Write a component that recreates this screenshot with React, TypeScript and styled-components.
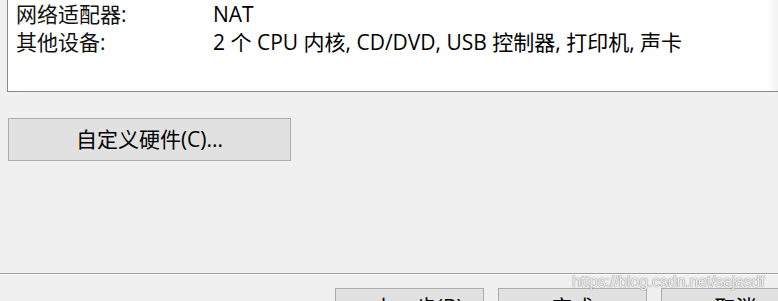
import React from "react";
import styled, { createGlobalStyle } from "styled-components";

const GlobalStyle = createGlobalStyle`
  html, body {
    margin: 0;
    padding: 0;
    width: 778px;
    height: 301px;
    overflow: hidden;
    background: #f0f0f0;
  }
  body {
    font-family: "Open Sans", "Noto Sans CJK SC", sans-serif;
    font-size: 21px;
    color: #000;
  }
`;

const Page = styled.div`
  position: relative;
  display: flex;
  flex-direction: column;
  width: 778px;
  height: 301px;
`;

const InfoPanel = styled.div`
  margin-left: 7px;
  height: 92px;
  box-sizing: border-box;
  padding: 0 0 0 8px;
  background: linear-gradient(to right, #fff 0, #fff 760px, #f0f0f0 771px);
  border-left: 1px solid #828790;
  border-bottom: 1px solid #828790;
  display: grid;
  grid-template-columns: 197px 1fr;
  grid-auto-rows: 28px;
  align-items: center;
`;

const Label = styled.div`
  line-height: 28px;
  white-space: nowrap;
  color: #111;
`;

const Value = styled.div`
  line-height: 28px;
  white-space: nowrap;
`;

const Row = styled.div`
  display: contents;
`;

const ActionArea = styled.div`
  padding: 26px 0 0 8px;
  flex: 1;
`;

const Button = styled.button<{ $width: number }>`
  box-sizing: border-box;
  width: ${(p) => p.$width}px;
  height: 43px;
  flex: none;
  background: #e1e1e1;
  border: 1px solid #adadad;
  border-radius: 0;
  font-family: "Open Sans", "Noto Sans CJK SC", sans-serif;
  font-size: 21px;
  color: #000;
  padding: 0;
  display: flex;
  align-items: center;
  justify-content: center;
  line-height: 1;
`;

const Footer = styled.div`
  border-top: 1px solid #a0a0a0;
  box-shadow: inset 0 1px 0 #ffffff;
  height: 28px;
  display: flex;
  gap: 14px;
  padding: 14px 0 0 335px;
  box-sizing: border-box;
  overflow: hidden;
`;

const FooterButton = styled(Button)`
  align-items: flex-start;
  padding-top: 8px;
`;

const Watermark = styled.div`
  position: absolute;
  left: 572px;
  top: 273px;
  font-family: "Liberation Sans", Arial, sans-serif;
  font-size: 16px;
  color: rgba(255, 255, 255, 0.9);
  text-shadow: 0 0 1px rgba(110, 110, 110, 0.9), 0 0 1px rgba(110, 110, 110, 0.6);
  letter-spacing: -0.2px;
  white-space: nowrap;
  pointer-events: none;
`;

const rows = [
  { label: "网络适配器:", value: "NAT" },
  { label: "其他设备:", value: "2 个 CPU 内核, CD/DVD, USB 控制器, 打印机, 声卡" },
];

export default function App() {
  return (
    <Page>
      <GlobalStyle />
      <InfoPanel>
        {rows.map((r) => (
          <Row key={r.label}>
            <Label>{r.label}</Label>
            <Value>{r.value}</Value>
          </Row>
        ))}
      </InfoPanel>
      <ActionArea>
        <Button $width={283}>自定义硬件(C)...</Button>
      </ActionArea>
      <Footer>
        <FooterButton $width={149}>&lt; 上一步(B)</FooterButton>
        <FooterButton $width={149}>完成</FooterButton>
        <FooterButton $width={149}>取消</FooterButton>
      </Footer>
      <Watermark>https://blog.csdn.net/sajasdf</Watermark>
    </Page>
  );
}
